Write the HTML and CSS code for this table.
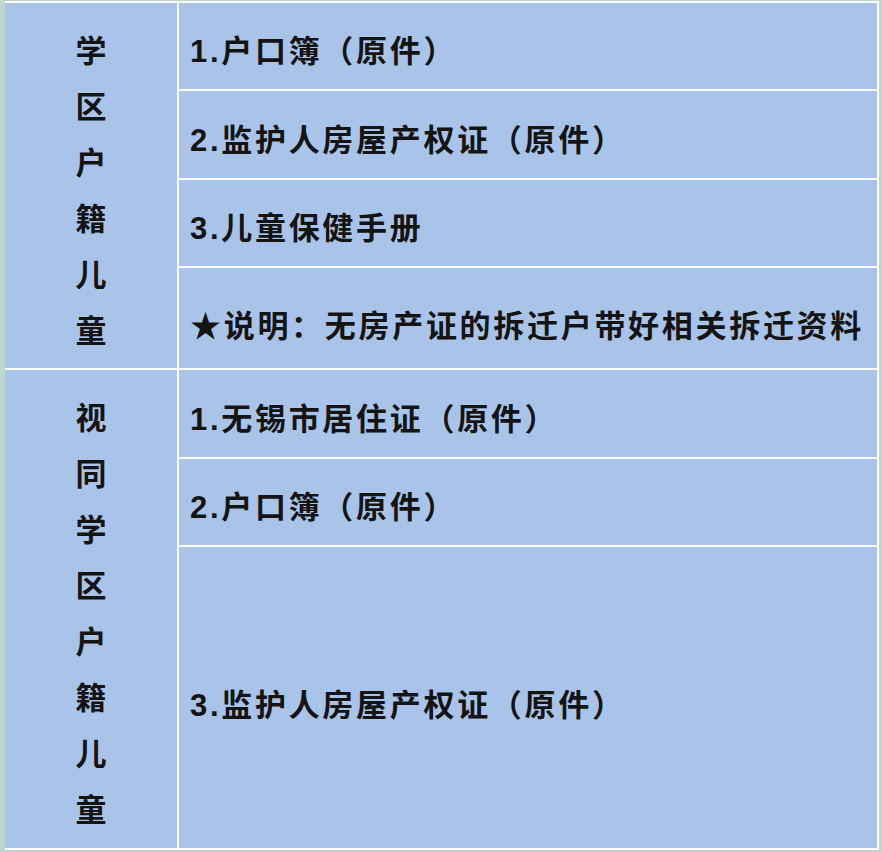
FILE: index.html
```html
<!DOCTYPE html>
<html lang="zh-CN">
<head>
<meta charset="utf-8">
<link rel="stylesheet" href="styles.css">
</head>
<body>
<div class="sheet">
  <div class="side side-a"><span>学</span><span>区</span><span>户</span><span>籍</span><span>儿</span><span>童</span></div>
  <div class="item r1">1.户口簿（原件）</div>
  <div class="item r2">2.监护人房屋产权证（原件）</div>
  <div class="item r3">3.儿童保健手册</div>
  <div class="item r4">★说明：无房产证的拆迁户带好相关拆迁资料</div>
  <div class="side side-b"><span>视</span><span>同</span><span>学</span><span>区</span><span>户</span><span>籍</span><span>儿</span><span>童</span></div>
  <div class="item r5">1.无锡市居住证（原件）</div>
  <div class="item r6">2.户口簿（原件）</div>
  <div class="item r7">3.监护人房屋产权证（原件）</div>
</div>
</body>
</html>
```

FILE: styles.css
```css
html, body {
  margin: 0;
  padding: 0;
  background: #bed6d2;
}
body {
  width: 882px;
  height: 852px;
  overflow: hidden;
  font-family: "Liberation Sans", "Noto Sans CJK SC", sans-serif;
  font-weight: bold;
  color: #141414;
}
.sheet {
  margin: 1px 3px 0 5px;
  padding: 2px 2px 2px 0;
  background: #ffffff;
  display: grid;
  grid-template-columns: 172px 698px;
  grid-template-rows: 86px 87px 86px 100px 87px 86px 301px;
  gap: 2px;
}
.side, .item {
  background: #a9c4e8;
}
.side {
  grid-column: 1;
  display: flex;
  flex-direction: column;
  align-items: center;
  justify-content: center;
  padding-top: 12px;
  font-size: 31px;
  line-height: 56px;
}
.side span {
  display: block;
}
.side-a { grid-row: 1 / 5; }
.side-b { grid-row: 5 / 8; }
.item {
  grid-column: 2;
  display: flex;
  align-items: center;
  padding: 5px 0 0 11px;
  font-size: 31px;
  letter-spacing: 2.7px;
  white-space: nowrap;
}
.r4 { padding-top: 10px; }
.r7 { padding-top: 10px; }
```
